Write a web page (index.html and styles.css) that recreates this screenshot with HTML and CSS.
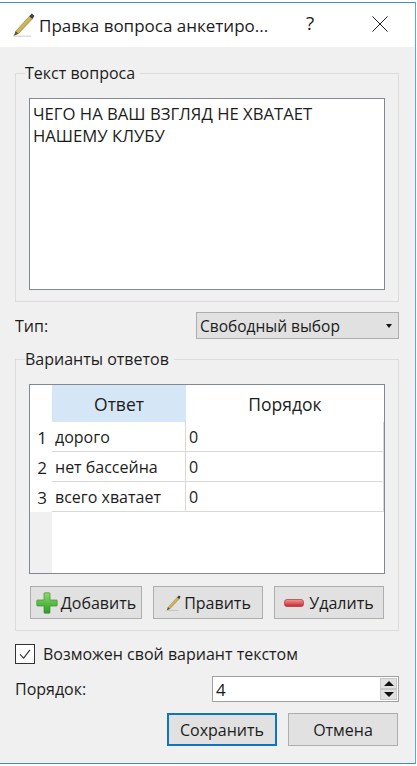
FILE: index.html
```html
<!DOCTYPE html>
<html lang="ru">
<head>
<meta charset="utf-8">
<title>Правка вопроса анкетирования</title>
<link rel="stylesheet" href="styles.css">
</head>
<body>
<svg class="defs" width="0" height="0" aria-hidden="true">
  <defs>
    <linearGradient id="pencilBody" x1="0" y1="0" x2="1" y2="1">
      <stop offset="0" stop-color="#f6e58a"/>
      <stop offset="1" stop-color="#a8821c"/>
    </linearGradient>
    <linearGradient id="plusFill" x1="0" y1="0" x2="0" y2="1">
      <stop offset="0" stop-color="#8fdc6c"/>
      <stop offset="1" stop-color="#2a9a22"/>
    </linearGradient>
    <linearGradient id="minusFill" x1="0" y1="0" x2="0" y2="1">
      <stop offset="0" stop-color="#f09a9a"/>
      <stop offset="1" stop-color="#c8242c"/>
    </linearGradient>
    <symbol id="pencil" viewBox="0 0 24 24">
      <path d="M2 23.2 L20 23.2" stroke="#000" stroke-opacity=".14" stroke-width="1.4"/>
      <path d="M18.5 3.2 L21.4 5.8 L7.4 20.6 L4 21.8 L4.8 18.2 Z" fill="url(#pencilBody)" stroke="#7d6a2a" stroke-width=".6"/>
      <path d="M18.2 3.2 L20.8 .6 L23.4 2.8 L21.6 6 Z" fill="#3d3d3d"/>
      <path d="M4.8 18.2 L7.4 20.6 L2.6 23 Z" fill="#5a5040"/>
    </symbol>
  </defs>
</svg>
<div class="window">
  <header class="titlebar">
    <svg class="title-icon"><use href="#pencil"/></svg>
    <span class="title-text">Правка вопроса анкетиро...</span>
    <span class="help">?</span>
    <svg class="close" viewBox="0 0 16 16"><path d="M.5 .5 L15.5 15.5 M15.5 .5 L.5 15.5" stroke="#1a1a1a" stroke-width="1" fill="none"/></svg>
  </header>
  <main class="content">
    <fieldset class="group group-question">
      <legend>Текст вопроса</legend>
      <div class="textarea">ЧЕГО НА ВАШ ВЗГЛЯД НЕ ХВАТАЕТ<br>НАШЕМУ КЛУБУ</div>
    </fieldset>
    <div class="form-row type-row">
      <span>Тип:</span>
      <div class="combo">
        <span>Свободный выбор</span>
        <i class="combo-arrow"></i>
      </div>
    </div>
    <fieldset class="group group-answers">
      <legend>Варианты ответов</legend>
      <div class="table">
        <div class="corner"></div>
        <div class="head head-active">Ответ</div>
        <div class="head">Порядок</div>
        <div class="num">1</div><div class="cell">дорого</div><div class="cell">0</div>
        <div class="num">2</div><div class="cell">нет бассейна</div><div class="cell">0</div>
        <div class="num">3</div><div class="cell">всего хватает</div><div class="cell">0</div>
        <div class="gutter"></div>
        <div class="blank"></div>
      </div>
      <div class="actions">
        <button class="btn btn-add" type="button">
          <svg class="ico-plus" viewBox="0 0 22 22"><path d="M8 1.5 Q8 .8 8.8 .8 H13.2 Q14 .8 14 1.5 V8 H20.5 Q21.2 8 21.2 8.8 V13.2 Q21.2 14 20.5 14 H14 V20.5 Q14 21.2 13.2 21.2 H8.8 Q8 21.2 8 20.5 V14 H1.5 Q.8 14 .8 13.2 V8.8 Q.8 8 1.5 8 H8 Z" fill="url(#plusFill)" stroke="#3f8f36" stroke-width=".7"/></svg>Добавить
        </button>
        <button class="btn btn-edit" type="button"><svg class="ico-pencil"><use href="#pencil"/></svg>Править</button>
        <button class="btn btn-del" type="button">
          <svg class="ico-minus" viewBox="0 0 20 8"><rect x=".5" y=".5" width="19" height="7" rx="2.5" fill="url(#minusFill)" stroke="#b5323a" stroke-width=".7"/></svg>Удалить
        </button>
      </div>
    </fieldset>
    <div class="check-row">
      <span class="checkbox"><svg viewBox="0 0 20 20"><path d="M4.5 10.5 L8.5 14.5 L15.5 5.5" fill="none" stroke="#333" stroke-width="1.3"/></svg></span>
      <span>Возможен свой вариант текстом</span>
    </div>
    <div class="form-row order-row">
      <span>Порядок:</span>
      <div class="spin">
        <span class="spin-value">4</span>
        <div class="spin-btns">
          <span class="spin-btn"><i class="tri-up"></i></span>
          <span class="spin-btn"><i class="tri-down"></i></span>
        </div>
      </div>
    </div>
    <div class="footer">
      <button class="btn btn-primary" type="button">Сохранить</button>
      <button class="btn btn-cancel" type="button">Отмена</button>
    </div>
  </main>
</div>
</body>
</html>
```

FILE: styles.css
```css
* { box-sizing: border-box; }
html, body { margin: 0; padding: 0; background: #fff; }
body {
  width: 417px;
  height: 766px;
  overflow: hidden;
  font-family: "Open Sans", "Noto Sans", sans-serif;
  font-size: 16px;
  color: #1c1c1c;
  padding-top: 2px;
}
.defs { position: absolute; }
.window {
  width: 416px;
  height: 762px;
  border-top: 1px solid #3f8fc4;
  border-right: 1px solid #5fa6d2;
  border-bottom: 1px solid #3f8fc4;
  display: flex;
  flex-direction: column;
  background: #f0f0f0;
}
.titlebar {
  height: 44px;
  flex: none;
  background: #fff;
  display: flex;
  align-items: center;
  padding-left: 11px;
}
.title-icon { width: 24px; height: 24px; margin-right: 4px; }
.title-text { width: 267px; white-space: nowrap; font-size: 17px; }
.help { width: 14px; font-size: 19px; margin-top: -4px; }
.close { width: 16px; height: 16px; margin-left: 52px; margin-top: -2px; }
.content {
  flex: 1;
  padding: 16px 16px 0 15px;
  display: flex;
  flex-direction: column;
}
.group {
  margin: 0;
  padding: 0;
  border: 1px solid #dcdcdc;
  min-width: 0;
}
.group legend {
  margin-left: -4px;
  padding: 0 5px 0 0;
  line-height: 20px;
  height: 20px;
}
.group-question { height: 239px; padding: 15px 13px 0 13px; }
.textarea {
  height: 192px;
  background: #fff;
  border: 1px solid #828790;
  padding: 4px 3px;
  line-height: 22px;
  font-size: 16.7px;
  white-space: nowrap;
}
.form-row {
  display: flex;
  justify-content: space-between;
  align-items: center;
}
.type-row { margin-top: 10px; height: 27px; }
.combo {
  width: 203px;
  height: 27px;
  border: 1px solid #adadad;
  background: #e1e1e1;
  display: flex;
  align-items: center;
  justify-content: space-between;
  padding: 0 6px 0 3px;
  font-size: 15.5px;
}
.combo-arrow {
  width: 0; height: 0;
  border-left: 3.5px solid transparent;
  border-right: 3.5px solid transparent;
  border-top: 4px solid #111;
}
.group-answers { margin-top: 10px; height: 282px; padding: 15px 13px 0 13px; }
.table {
  height: 190px;
  border: 1px solid #828790;
  background: #fff;
  display: grid;
  grid-template-columns: 22px 134px 1fr;
  grid-template-rows: 37px 30px 30px 30px 1fr;
}
.head {
  display: flex;
  align-items: center;
  justify-content: center;
  background: #fff;
  font-size: 17.5px;
}
.head-active { background: #d5e7f7; }
.corner { background: #fff; }
.num {
  display: flex;
  align-items: center;
  justify-content: flex-end;
  padding-right: 5px;
  font-size: 17px;
}
.cell {
  display: flex;
  align-items: center;
  padding-left: 3px;
  border-right: 1px solid #d8d8d8;
  border-bottom: 1px solid #d8d8d8;
}
.gutter { background: #f0f0f0; }
.blank { grid-column: 2 / 4; background: #fff; }
.actions {
  display: flex;
  justify-content: space-between;
  margin: 12px 1px 0 1px;
}
.btn {
  font: inherit;
  color: inherit;
  height: 33px;
  width: 110px;
  border: 1px solid #adadad;
  background: #e1e1e1;
  padding: 0;
  display: flex;
  align-items: center;
  justify-content: center;
}
.btn-add { width: 112px; }
.ico-plus { width: 22px; height: 22px; margin-right: 3px; }
.ico-pencil { width: 16px; height: 16px; margin-right: 3px; }
.ico-minus { width: 20px; height: 8px; margin-right: 5px; }
.check-row {
  margin-top: 13px;
  height: 20px;
  display: flex;
  align-items: center;
  gap: 8px;
}
.checkbox {
  width: 20px;
  height: 20px;
  border: 1px solid #333;
  background: #fff;
  display: block;
}
.checkbox svg { display: block; width: 18px; height: 18px; }
.order-row { margin-top: 12px; height: 26px; }
.spin {
  width: 187px;
  height: 26px;
  border: 1px solid #a0a0a0;
  background: #fff;
  display: flex;
  align-items: center;
  justify-content: space-between;
  padding-left: 3px;
  font-size: 17px;
}
.spin-btns {
  width: 17px;
  height: 22px;
  margin-right: 1px;
  display: flex;
  flex-direction: column;
}
.spin-btn {
  flex: 1;
  background: #e1e1e1;
  border: 1px solid #c8c8c8;
  display: flex;
  align-items: center;
  justify-content: center;
}
.tri-up, .tri-down {
  width: 0; height: 0;
  border-left: 5px solid transparent;
  border-right: 5px solid transparent;
}
.tri-up { border-bottom: 5px solid #111; }
.tri-down { border-top: 5px solid #111; }
.footer {
  margin-top: 11px;
  display: flex;
  justify-content: flex-end;
  gap: 11px;
  padding-right: 1px;
}
.btn-primary { border: 2px solid #0f74c2; }
```
